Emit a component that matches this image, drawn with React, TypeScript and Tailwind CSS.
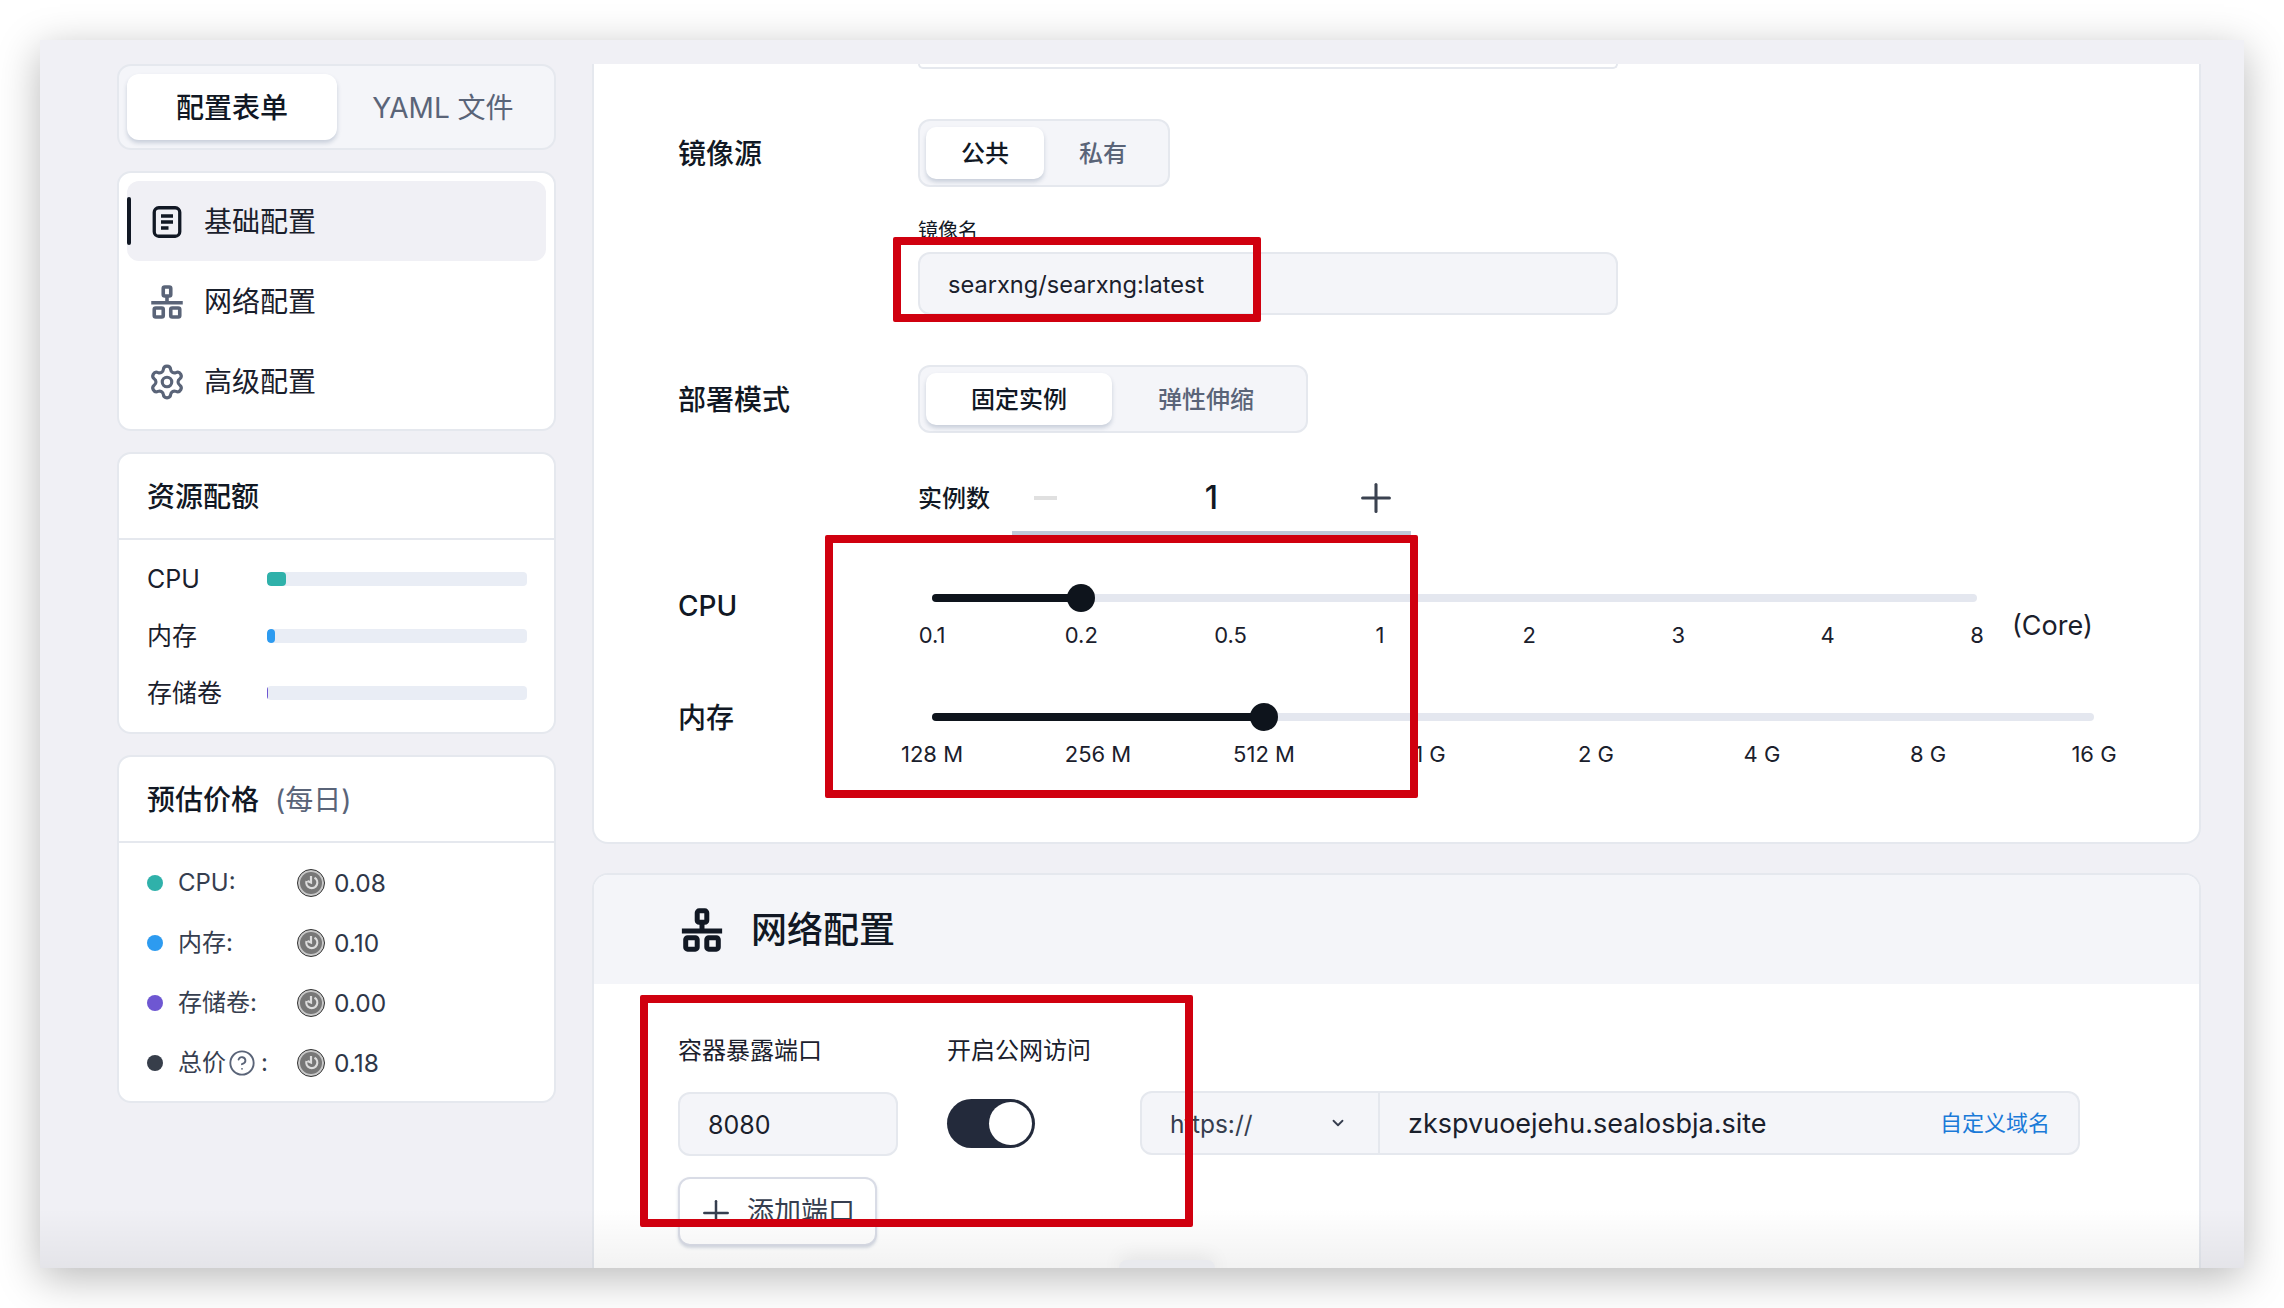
import { ChevronDown, CircleHelp, Plus, Settings } from 'lucide-react'

const cpuTicks = ['0.1', '0.2', '0.5', '1', '2', '3', '4', '8']
const memTicks = ['128 M', '256 M', '512 M', '1 G', '2 G', '4 G', '8 G', '16 G']

function NetworkIcon({ className, stroke = 2.4 }: { className: string; stroke?: number }) {
  return (
    <svg viewBox="0 0 24 24" fill="none" stroke="currentColor" strokeWidth={stroke} className={className}>
      <rect x="9.5" y="2" width="5" height="6" rx="1" />
      <rect x="3.5" y="16" width="6" height="6" rx="1" />
      <rect x="14.5" y="16" width="6" height="6" rx="1" />
      <path d="M12 8v4.5M1.5 12.5h21" />
    </svg>
  )
}

function DocIcon() {
  return (
    <svg viewBox="0 0 24 24" fill="none" stroke="currentColor" strokeWidth="2.2" className="w-[36px] h-[36px] text-[#111824]">
      <rect x="3.5" y="2.5" width="17" height="19" rx="3" />
      <path d="M8 8h8M8 12h8M8 16h5" />
    </svg>
  )
}

function Coin() {
  return (
    <svg viewBox="0 0 28 28" className="w-[28px] h-[28px] shrink-0">
      <circle cx="14" cy="14" r="13.5" fill="#c8c8c8" stroke="#333" strokeWidth="1" />
      <circle cx="14" cy="14" r="11" fill="#777777" />
      <path d="M9.5 12a5.5 5.5 0 1 0 8-3.2M14 7v6.5l-3.5-1.5" fill="none" stroke="#dcdcdc" strokeWidth="2.2" />
    </svg>
  )
}

function Segmented({ items, widths }: { items: string[]; widths: string[] }) {
  return (
    <div className="flex h-[68px] w-fit rounded-[12px] border-2 border-[#e5e8ee] bg-[#f4f5f9] p-[6px] text-[24px] leading-[32px]">
      <div className={`${widths[0]} h-[52px] pt-[2px] rounded-[10px] bg-white shadow-[0_3px_4px_rgba(100,120,150,0.3)] flex items-center justify-center font-medium text-[#111824]`}>
        {items[0]}
      </div>
      <div className={`${widths[1]} h-[52px] pt-[2px] flex items-center justify-center font-medium text-[#5a6478]`}>
        {items[1]}
      </div>
    </div>
  )
}

function Slider({ ticks, index, width }: { ticks: string[]; index: number; width: string }) {
  const pct = (index / (ticks.length - 1)) * 100
  return (
    <div className={width}>
      <div className="relative h-[8px] rounded-full bg-[#e4e7ef]">
        <div className="absolute left-0 top-0 h-[8px] rounded-full bg-[#0e141c]" style={{ width: `${pct}%` }} />
        <div className="absolute top-[-10px] w-[28px] h-[28px] -ml-[14px] rounded-full bg-[#0e141c]" style={{ left: `${pct}%` }} />
      </div>
      <div className="mt-[19px] flex justify-between">
        {ticks.map((t) => (
          <div key={t} className="w-0 flex justify-center whitespace-nowrap text-[22px] leading-[28px] text-[#1a202c]">
            {t}
          </div>
        ))}
      </div>
    </div>
  )
}

function QuotaRow({ label, fill, color }: { label: string; fill: string; color: string }) {
  return (
    <div className="flex items-center h-[57px]">
      <div className="w-[120px] pt-[2px] text-[25px] text-[#1a202c]">{label}</div>
      <div className="w-[260px] h-[14px] rounded-[4px] bg-[#e9edf5] overflow-hidden">
        <div className={`${fill} ${color} h-full rounded-[4px]`} />
      </div>
    </div>
  )
}

function PriceRow({ color, label, value, help }: { color: string; label: string; value: string; help?: boolean }) {
  return (
    <div className="flex items-center h-[60px] text-[24px] text-[#363e4f]">
      <div className={`${color} w-[16px] h-[16px] rounded-full`} />
      <div className="ml-[15px] w-[119px] flex items-center whitespace-nowrap">
        {label}
        {help && <CircleHelp className="w-[28px] h-[28px] ml-[2px] mr-[5px] text-[#5a6478]" strokeWidth={1.6} />}
        {help ? ':' : ''}
      </div>
      <Coin />
      <div className="ml-[9px] text-[24.5px] text-[#2e3648]">{value}</div>
    </div>
  )
}

export default function App() {
  return (
    <div className="w-[2284px] h-[1308px] bg-white p-[40px] overflow-hidden text-[#111824] font-['Inter','Noto_Sans_CJK_SC',sans-serif]">
      <div className="relative w-[2204px] h-[1228px] bg-[#f0f0f5] overflow-hidden shadow-[0_10px_40px_rgba(0,0,0,0.28)]">
        <div className="flex h-full pt-[24px] pl-[77px]">
          {/* left column */}
          <div className="w-[439px] shrink-0 flex flex-col gap-[21px]">
            <div className="flex h-[86px] rounded-[14px] border-2 border-[#e5e8ee] bg-[#f4f5f9] p-[8px] text-[28px]">
              <div className="w-[210px] h-[66px] pt-[2px] rounded-[12px] bg-white shadow-[0_3px_4px_rgba(100,120,150,0.3)] flex items-center justify-center font-medium">
                配置表单
              </div>
              <div className="flex-1 h-[66px] pt-[2px] pl-[3px] flex items-center justify-center text-[#5a6478]">YAML 文件</div>
            </div>

            <div className="h-[260px] rounded-[14px] border-2 border-[#e5e8ee] bg-white p-[8px] text-[28px] text-[#1a202c]">
              <div className="relative h-[80px] pt-[2px] rounded-[12px] bg-[#f0f0f5] flex items-center pl-[22px] gap-[19px]">
                <div className="absolute left-0 top-[16px] w-[4px] h-[48px] rounded-full bg-[#111824]" />
                <DocIcon />
                基础配置
              </div>
              <div className="h-[80px] pt-[2px] flex items-center pl-[22px] gap-[19px]">
                <NetworkIcon className="w-[36px] h-[36px] text-[#5a6478]" />
                网络配置
              </div>
              <div className="h-[80px] pt-[2px] flex items-center pl-[21px] gap-[18px]">
                <Settings className="w-[38px] h-[38px] text-[#5a6478]" strokeWidth={2} />
                高级配置
              </div>
            </div>

            <div className="h-[282px] rounded-[14px] border-2 border-[#e5e8ee] bg-white">
              <div className="h-[86px] pt-[2px] border-b-2 border-[#e5e8ee] pl-[28px] flex items-center text-[28px] font-medium">资源配额</div>
              <div className="pl-[28px] pt-[10px]">
                <QuotaRow label="CPU" fill="w-[19px]" color="bg-[#2fb1aa]" />
                <QuotaRow label="内存" fill="w-[8px]" color="bg-[#2d9bf0]" />
                <QuotaRow label="存储卷" fill="w-[1px]" color="bg-[#6e57d2]" />
              </div>
            </div>

            <div className="h-[348px] rounded-[14px] border-2 border-[#e5e8ee] bg-white">
              <div className="h-[86px] pt-[2px] border-b-2 border-[#e5e8ee] pl-[28px] flex items-center text-[28px] font-medium">
                预估价格
                <span className="ml-[16px] font-normal text-[#5a6478]">(每日)</span>
              </div>
              <div className="pl-[28px] pt-[10px]">
                <PriceRow color="bg-[#2fb1aa]" label="CPU:" value="0.08" />
                <PriceRow color="bg-[#2d9bf0]" label="内存:" value="0.10" />
                <PriceRow color="bg-[#6e57d2]" label="存储卷:" value="0.00" />
                <PriceRow color="bg-[#373e4a]" label="总价" value="0.18" help />
              </div>
            </div>
          </div>

          {/* right column */}
          <div className="w-[1609px] ml-[36px] shrink-0">
            <div className="h-[780px] rounded-b-[16px] border-x-2 border-b-2 border-[#e5e8ee] bg-white pl-[84px]">
              <div className="ml-[240px] w-[700px] h-[5px] rounded-b-[12px] border-x-2 border-b-2 border-[#e5e8ee]" />

              <div className="mt-[50px] flex items-center">
                <div className="w-[240px] pt-[2px] text-[28px] font-medium">镜像源</div>
                <Segmented items={['公共', '私有']} widths={['w-[118px]', 'w-[118px]']} />
              </div>

              <div className="ml-[240px]">
                <div className="mt-[32px] h-[24px] text-[20px] leading-[24px]">镜像名</div>
                <div className="mt-[9px] w-[700px] h-[63px] rounded-[12px] border-2 border-[#e5e8ee] bg-[#f4f5f9] flex items-center pl-[28px] pt-[2px] text-[23.6px] text-[#1a202c]">
                  searxng/searxng:latest
                </div>
              </div>

              <div className="mt-[50px] flex items-center">
                <div className="w-[240px] pt-[2px] text-[28px] font-medium">部署模式</div>
                <Segmented items={['固定实例', '弹性伸缩']} widths={['w-[186px]', 'w-[188px]']} />
              </div>

              <div className="ml-[240px] mt-[32px] flex items-start">
                <div className="w-[94px] h-[66px] pt-[2px] flex items-center text-[24px] font-medium whitespace-nowrap">实例数</div>
                <div className="w-[399px] h-[72px] border-b-[6px] border-[#bfc9d9] grid grid-cols-3 items-center">
                  <div className="pl-[22px]">
                    <div className="w-[23px] h-[4px] bg-[#e0e0e0]" />
                  </div>
                  <div className="text-center text-[32px] leading-[40px] font-medium">1</div>
                  <div className="flex justify-end pr-[12px]">
                    <Plus className="w-[46px] h-[46px] text-[#3b4250]" strokeWidth={1.6} />
                  </div>
                </div>
              </div>

              <div className="mt-[48px] flex items-start">
                <div className="w-[254px] h-[40px] pt-[2px] flex items-center text-[28px] font-medium">CPU</div>
                <div className="pt-[9px]">
                  <Slider ticks={cpuTicks} index={1} width="w-[1045px]" />
                </div>
                <div className="ml-[35px] mt-[21px] h-[40px] flex items-center text-[27px] text-[#1a202c] whitespace-nowrap">(Core)</div>
              </div>

              <div className="mt-[48px] flex items-start">
                <div className="w-[254px] h-[40px] pt-[2px] flex items-center text-[28px] font-medium">内存</div>
                <div className="pt-[16px]">
                  <Slider ticks={memTicks} index={2} width="w-[1162px]" />
                </div>
              </div>
            </div>

            <div className="mt-[29px] h-[500px] rounded-t-[16px] border-x-2 border-t-2 border-[#e5e8ee] bg-white">
              <div className="h-[109px] bg-[#f4f5f9] rounded-t-[14px] flex items-center pl-[85px] gap-[26px] text-[36px] font-medium">
                <NetworkIcon className="w-[46px] h-[46px] text-[#111824]" stroke={2.6} />
                网络配置
              </div>
              <div className="flex pl-[84px] pt-[55px]">
                <div className="w-[220px]">
                  <div className="h-[24px] text-[24px] leading-[24px] whitespace-nowrap text-[#1a202c]">容器暴露端口</div>
                  <div className="mt-[29px] h-[64px] rounded-[12px] border-2 border-[#e5e8ee] bg-[#f4f5f9] flex items-center pl-[28px] pt-[3px] text-[25px] text-[#1a202c]">
                    8080
                  </div>
                  <div className="mt-[21px] w-[199px] h-[69px] pt-[2px] rounded-[12px] border-2 border-[#d9dce6] bg-white shadow-[0_2px_3px_rgba(100,120,150,0.25)] flex items-center pl-[16px] gap-[11px] text-[27px] text-[#363e4f] whitespace-nowrap">
                    <Plus className="w-[40px] h-[40px] shrink-0" strokeWidth={1.5} />
                    添加端口
                  </div>
                </div>
                <div className="ml-[49px] w-[193px]">
                  <div className="h-[24px] text-[24px] leading-[24px] whitespace-nowrap text-[#1a202c]">开启公网访问</div>
                  <div className="mt-[36px] w-[88px] h-[49px] rounded-full bg-[#232a3b] flex items-center justify-end pr-[3px]">
                    <div className="w-[43px] h-[43px] rounded-full bg-white" />
                  </div>
                </div>
                <div className="mt-[52px] h-[64px] flex">
                  <div className="w-[240px] rounded-l-[12px] border-2 border-[#e5e8ee] bg-[#f4f5f9] flex items-center pl-[28px] pr-[31px] justify-between text-[24.5px] text-[#363e4f]">
                    <span className="pt-[2px]">https://</span>
                    <ChevronDown className="w-[18px] h-[18px]" strokeWidth={2.4} />
                  </div>
                  <div className="w-[700px] rounded-r-[12px] border-2 border-l-0 border-[#e5e8ee] bg-[#f4f5f9] flex items-center justify-between pl-[28px] pr-[28px]">
                    <span className="pt-[2px] text-[27px] text-[#1a202c]">zkspvuoejehu.sealosbja.site</span>
                    <span className="text-[22px] text-[#1a7ad8]">自定义域名</span>
                  </div>
                </div>
              </div>
            </div>
          </div>
        </div>

        {/* bottom fade and handle */}
        <div className="absolute left-0 right-0 bottom-0 h-[60px] bg-gradient-to-b from-transparent to-black/5 pointer-events-none" />
        <div className="absolute left-[1079px] bottom-0 w-[96px] h-[8px] rounded-t-[8px] bg-[#e9eaee] shadow-[0_0_20px_rgba(0,0,0,0.14)]" />

        {/* red annotation boxes */}
        <div className="absolute left-[853px] top-[197px] w-[368px] h-[85px] rounded-[2px] border-8 border-[#d0000f]" />
        <div className="absolute left-[785px] top-[495px] w-[593px] h-[263px] rounded-[2px] border-8 border-[#d0000f]" />
        <div className="absolute left-[600px] top-[955px] w-[553px] h-[232px] rounded-[2px] border-8 border-[#d0000f]" />
      </div>
    </div>
  )
}
